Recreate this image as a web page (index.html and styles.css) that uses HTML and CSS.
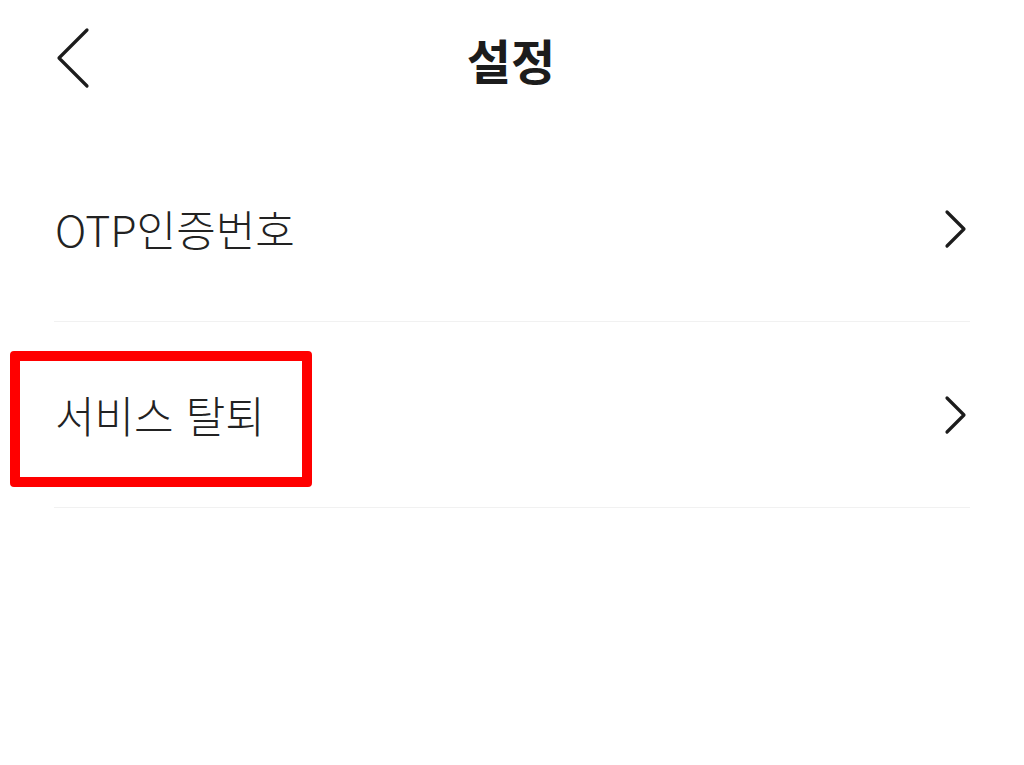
FILE: index.html
```html
<!DOCTYPE html>
<html lang="ko">
<head>
    <meta charset="UTF-8">
    <meta name="viewport" content="width=device-width, initial-scale=1.0">
    <title>설정</title>
    <link rel="stylesheet" href="styles.css">
</head>
<body>
    <header class="top-bar">
        <button class="back-btn" aria-label="뒤로">
            <svg width="40" height="64" viewBox="0 0 40 64">
                <polyline points="31,3 3,31 31,59" fill="none" stroke="#1c1c1c" stroke-width="3.2" stroke-linecap="round" stroke-linejoin="round"/>
            </svg>
        </button>
        <h1 class="title">설정</h1>
    </header>

    <ul class="menu">
        <li class="menu-item">
            <span class="label">OTP인증번호</span>
            <svg class="arrow" width="26" height="40" viewBox="0 0 26 40">
                <polyline points="4,3 21,20 4,37" fill="none" stroke="#1c1c1c" stroke-width="3.2" stroke-linecap="round" stroke-linejoin="round"/>
            </svg>
        </li>
        <li class="menu-item">
            <span class="label">서비스 탈퇴</span>
            <svg class="arrow" width="26" height="40" viewBox="0 0 26 40">
                <polyline points="4,3 21,20 4,37" fill="none" stroke="#1c1c1c" stroke-width="3.2" stroke-linecap="round" stroke-linejoin="round"/>
            </svg>
            <div class="highlight"></div>
        </li>
    </ul>
</body>
</html>
```

FILE: styles.css
```css
* {
    margin: 0;
    padding: 0;
    box-sizing: border-box;
}

body {
    font-family: "Noto Sans CJK KR", "Noto Sans", sans-serif;
    background: #fff;
    color: #1c1c1c;
    width: 1024px;
    height: 765px;
    overflow: hidden;
}

.top-bar {
    position: relative;
    height: 118px;
    display: flex;
    align-items: center;
    justify-content: center;
}

.back-btn {
    position: absolute;
    left: 56px;
    top: 27px;
    border: none;
    background: none;
    display: flex;
}

.title {
    font-size: 48px;
    font-weight: 700;
    line-height: 1;
    margin-left: -2px;
}

.menu {
    list-style: none;
    margin: 18px 54px 0 54px;
}

.menu-item {
    position: relative;
    height: 186px;
    display: flex;
    align-items: center;
    justify-content: space-between;
    border-bottom: 1px solid #f1f1f1;
    padding-left: 1px;
    padding-right: 1px;
}

.label {
    font-size: 43px;
    font-weight: 300;
    line-height: 1;
    color: #222;
}

.highlight {
    position: absolute;
    left: -44px;
    top: 29px;
    width: 302px;
    height: 136px;
    border: 10px solid #ff0000;
    border-radius: 4px;
}
```
